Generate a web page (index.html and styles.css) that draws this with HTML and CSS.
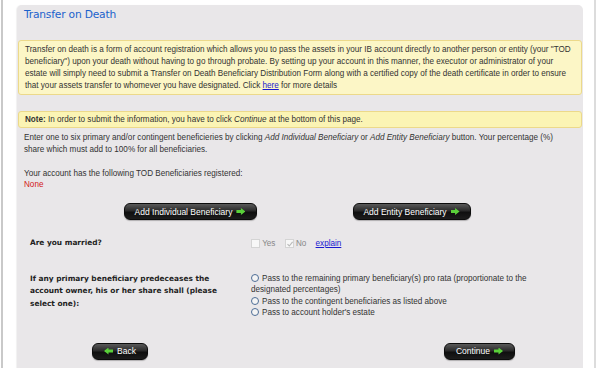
FILE: index.html
```html
<!DOCTYPE html>
<html lang="en">
<head>
  <meta charset="UTF-8">
  <title>Transfer on Death</title>
  <link rel="stylesheet" href="styles.css">
</head>
<body>
  <div class="frame">
    <div class="panel">
      <h1 class="title">Transfer on Death</h1>

      <div class="info-box">
        Transfer on death is a form of account registration which allows you to pass the assets in your IB account directly to another person or entity (your "TOD beneficiary") upon your death without having to go through probate. By setting up your account in this manner, the executor or administrator of your estate will simply need to submit a Transfer on Death Beneficiary Distribution Form along with a certified copy of the death certificate in order to ensure that your assets transfer to whomever you have designated. Click <a href="#">here</a> for more details
      </div>

      <div class="note-box">
        <b>Note:</b> In order to submit the information, you have to click <i>Continue</i> at the bottom of this page.
      </div>

      <p class="intro">Enter one to six primary and/or contingent beneficieries by clicking <i>Add Individual Beneficiary</i> or <i>Add Entity Beneficiary</i> button. Your percentage (%) share which must add to 100% for all beneficiaries.</p>

      <p class="registered">Your account has the following TOD Beneficiaries registered:<br><span class="none">None</span></p>

      <div class="add-buttons">
        <a class="btn btn-wide" href="#">Add Individual Beneficiary <span class="arrow"></span></a>
        <a class="btn btn-entity" href="#">Add Entity Beneficiary <span class="arrow"></span></a>
      </div>

      <table class="form">
        <tr class="married">
          <th>Are you married?</th>
          <td>
            <span class="check"></span> <span class="muted">Yes</span>
            <span class="check checked"><svg width="8" height="8" viewBox="0 0 8 8"><path d="M1.5 4.2 L3.3 6 L6.6 1.8" fill="none" stroke="#b9b9b9" stroke-width="1.1"/></svg></span> <span class="muted">No</span>
            <a class="explain" href="#">explain</a>
          </td>
        </tr>
        <tr class="predecease">
          <th>If any primary beneficiary predeceases the account owner, his or her share shall (please select one):</th>
          <td>
            <div class="option"><span class="radio"></span>Pass to the remaining primary beneficiary(s) pro rata (proportionate to the designated percentages)</div>
            <div class="option"><span class="radio"></span>Pass to the contingent beneficiaries as listed above</div>
            <div class="option"><span class="radio"></span>Pass to account holder's estate</div>
          </td>
        </tr>
      </table>

      <div class="nav-buttons">
        <a class="btn btn-back" href="#"><span class="arrow left"></span> Back</a>
        <a class="btn btn-continue" href="#">Continue <span class="arrow"></span></a>
      </div>
    </div>
  </div>
</body>
</html>
```

FILE: styles.css
```css
html, body { margin: 0; padding: 0; background: #fff; }
body { font-family: "Liberation Sans", Arial, sans-serif; font-size: 8.15px; color: #333; }

.frame { margin-left: 1px; width: 595px; height: 368px; border-left: 2px solid #c9c9c9; border-right: 2px solid #dcdcdc; box-sizing: border-box; padding: 5px 0 0 14px; overflow: hidden; }
.panel { width: 566px; background: #e9e7e9; border-radius: 5px 5px 0 0; padding: 0 1px 20px; box-sizing: border-box; box-shadow: -1px 0 1px rgba(0,0,0,0.06); }

.title { margin: 0; padding: 3px 6px 0; height: 32px; font-size: 10.7px; font-weight: normal; color: #1b62cc; font-family: "DejaVu Sans", Verdana, sans-serif; letter-spacing: -0.2px; }

.info-box { background: #fcf6c6; border: 1px solid #ecd98a; border-radius: 3px; padding: 3px 6px 2px; line-height: 12px; }
.info-box a, .explain { color: #1a1ad0; text-decoration: underline; }

.note-box { margin-top: 16px; background: #fbf4b4; border: 1px solid #ecd98a; border-radius: 3px; padding: 2px 6px 1px; line-height: 12px; }

.intro { margin: 4px 16px 0 6px; line-height: 12px; }
.registered { margin: 12px 6px 0; line-height: 11px; }
.none { color: #d32020; }

.add-buttons { display: flex; justify-content: center; gap: 96px; margin-top: 13px; padding-right: 6px; }

.btn { display: inline-flex; align-items: center; justify-content: center; gap: 4px; height: 17px; box-sizing: border-box; border-radius: 6px; border: 1px solid #0c0c0c; background: linear-gradient(#5a5a5a 0%, #2a2a2a 45%, #0f0f0f 55%, #1c1c1c 100%); color: #fff; text-decoration: none; font-size: 8.5px; box-shadow: 0 1px 1px rgba(0,0,0,0.25); }
.btn-wide { width: 133px; }
.btn-entity { width: 118px; }
.btn-back { width: 56px; }
.btn-continue { width: 71px; }

.arrow { display: inline-block; width: 9px; height: 7px; background: #5ad13a; clip-path: polygon(0 30%, 50% 30%, 50% 0, 100% 50%, 50% 100%, 50% 70%, 0 70%); }
.arrow.left { transform: scaleX(-1); }

.form { border-collapse: collapse; margin: 14px 0 0 12px; width: 531px; }
.form th { text-align: left; vertical-align: top; width: 195px; padding: 0 26px 0 0; font-family: "DejaVu Sans", Verdana, sans-serif; font-size: 7.4px; font-weight: bold; color: #222; line-height: 12.5px; }
.form td { vertical-align: top; padding: 0; line-height: 11.5px; }
.married th, .married td { padding-top: 4px; padding-bottom: 23px; }
.married th { padding-top: 3px; }

.check { display: inline-block; width: 9px; height: 9px; background: #f7f7f7; border: 1px solid #d4d4d4; vertical-align: -2px; box-sizing: border-box; }
.check.checked { position: relative; margin-left: 7px; }
.check svg { position: absolute; left: 0; top: 0; }
.muted { color: #888; }
.explain { margin-left: 7px; }

.radio { display: inline-block; width: 8px; height: 8px; border: 1px solid #4d6d96; border-radius: 50%; background: #f4f4f4; box-sizing: border-box; vertical-align: -1px; margin-right: 3px; }

.nav-buttons { display: flex; justify-content: space-between; margin-top: 24px; padding: 0 67px 0 74px; }
```
